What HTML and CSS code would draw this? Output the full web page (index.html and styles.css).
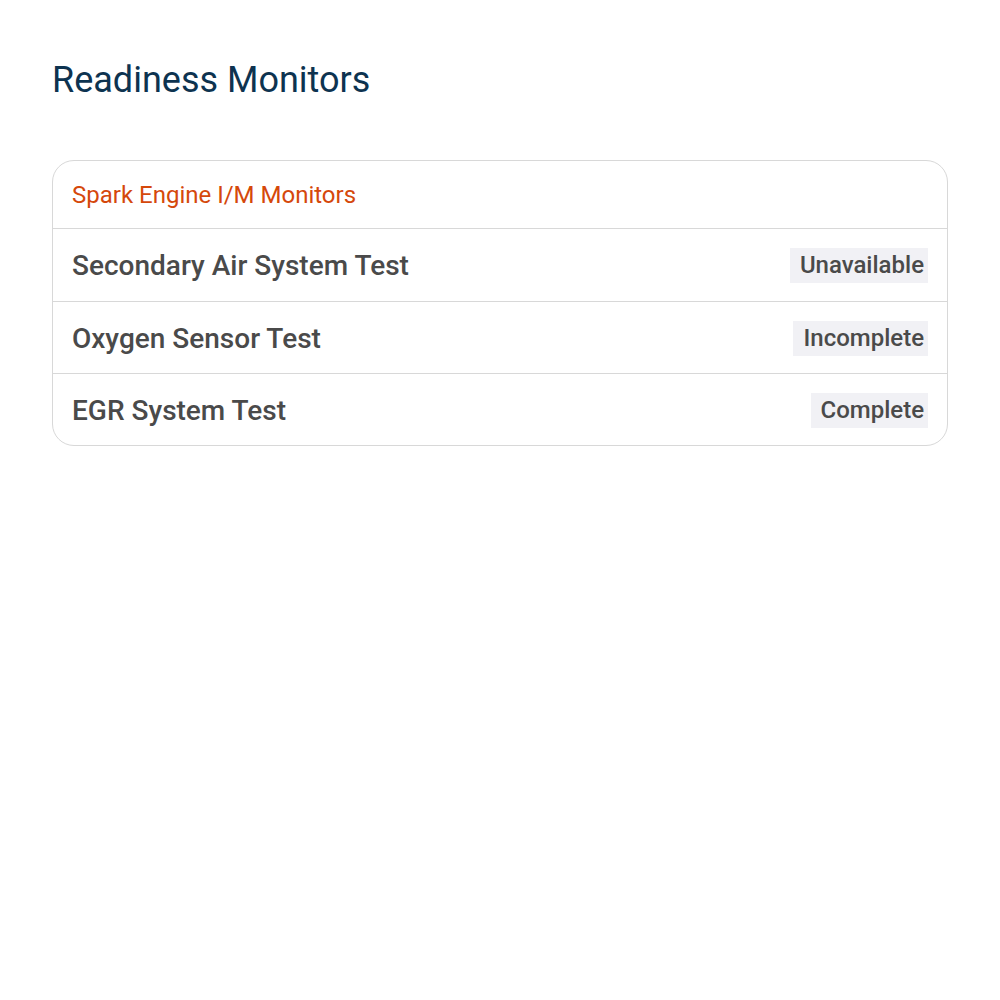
FILE: index.html
```html
<!DOCTYPE html>
<html>
<head>
<meta charset="utf-8">
<link rel="stylesheet" href="styles.css">
</head>
<body>
<div class="page">
  <h1 class="title">Readiness Monitors</h1>
  <div class="card">
    <div class="card-head">Spark Engine I/M Monitors</div>
    <div class="row"><span class="label">Secondary Air System Test</span><span class="badge">Unavailable</span></div>
    <div class="row"><span class="label">Oxygen Sensor Test</span><span class="badge">Incomplete</span></div>
    <div class="row"><span class="label">EGR System Test</span><span class="badge">Complete</span></div>
  </div>
</div>
</body>
</html>
```
FILE: styles.css
```css
* { box-sizing: border-box; }
html, body { margin: 0; padding: 0; background: #fff; }
body { font-family: Roboto, "Noto Sans", sans-serif; }
.page { padding: 56px 52px; }
.title {
  margin: 0;
  font-size: 36px;
  font-weight: 400;
  color: #0d3350;
  line-height: 48px;
}
.card {
  margin-top: 56px;
  border: 1px solid #d8d8d8;
  border-radius: 22px;
  overflow: hidden;
}
.card-head {
  height: 68px;
  padding: 0 19px;
  display: flex;
  align-items: center;
  font-size: 24px;
  color: #d5480b;
  border-bottom: 1px solid #d8d8d8;
}
.row {
  height: 73px;
  padding: 1px 19px 0 19px;
  display: flex;
  align-items: center;
  justify-content: space-between;
  border-bottom: 1px solid #d8d8d8;
}
.row:nth-child(3) { height: 72px; }
.row:last-child { border-bottom: none; height: 71px; }
.label {
  font-size: 28px;
  font-weight: 500;
  color: #4a4a4a;
}
.badge {
  background: #f1f1f5;
  padding: 4px 4px 4px 10px;
  font-size: 24px;
  font-weight: 500;
  color: #4a4a4a;
  line-height: 27px;
}
```
